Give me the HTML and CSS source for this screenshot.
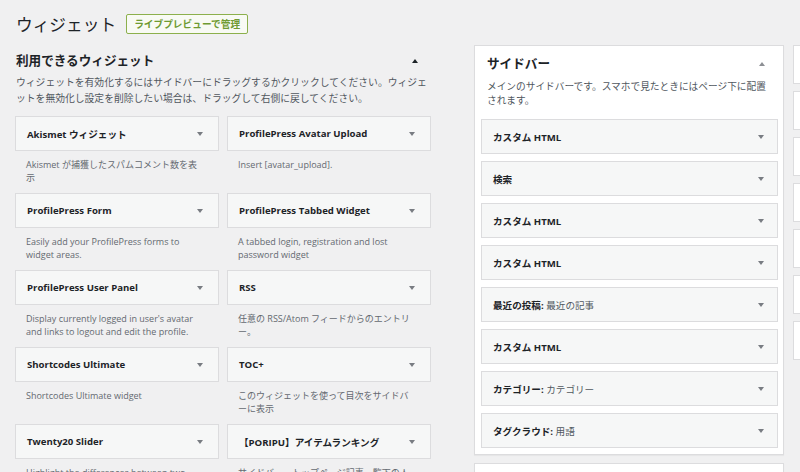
FILE: index.html
```html
<!DOCTYPE html>
<html lang="ja">
<head>
<meta charset="utf-8">
<title>ウィジェット</title>
<link rel="stylesheet" href="styles.css">
</head>
<body>
<header class="head">
  <h1 class="title">ウィジェット</h1>
  <a class="live-btn">ライブプレビューで管理</a>
</header>
<div class="columns">
  <section class="available">
    <div class="avail-head">
      <h2 class="sec-title">利用できるウィジェット</h2>
      <span class="tri-up"></span>
    </div>
    <p class="sec-desc">ウィジェットを有効化するにはサイドバーにドラッグするかクリックしてください。ウィジェットを無効化し設定を削除したい場合は、ドラッグして右側に戻してください。</p>
    <div class="widget-grid">
      <div class="widget">
        <div class="widget-top"><span class="wt">Akismet ウィジェット</span><span class="tri-down"></span></div>
        <p class="wdesc">Akismet が捕獲したスパムコメント数を表示</p>
      </div>
      <div class="widget">
        <div class="widget-top"><span class="wt">ProfilePress Avatar Upload</span><span class="tri-down"></span></div>
        <p class="wdesc">Insert [avatar_upload].</p>
      </div>
      <div class="widget">
        <div class="widget-top"><span class="wt">ProfilePress Form</span><span class="tri-down"></span></div>
        <p class="wdesc">Easily add your ProfilePress forms to widget areas.</p>
      </div>
      <div class="widget">
        <div class="widget-top"><span class="wt">ProfilePress Tabbed Widget</span><span class="tri-down"></span></div>
        <p class="wdesc">A tabbed login, registration and lost password widget</p>
      </div>
      <div class="widget">
        <div class="widget-top"><span class="wt">ProfilePress User Panel</span><span class="tri-down"></span></div>
        <p class="wdesc">Display currently logged in user's avatar and links to logout and edit the profile.</p>
      </div>
      <div class="widget">
        <div class="widget-top"><span class="wt">RSS</span><span class="tri-down"></span></div>
        <p class="wdesc">任意の RSS/Atom フィードからのエントリー。</p>
      </div>
      <div class="widget">
        <div class="widget-top"><span class="wt">Shortcodes Ultimate</span><span class="tri-down"></span></div>
        <p class="wdesc">Shortcodes Ultimate widget</p>
      </div>
      <div class="widget">
        <div class="widget-top"><span class="wt">TOC+</span><span class="tri-down"></span></div>
        <p class="wdesc">このウィジェットを使って目次をサイドバーに表示</p>
      </div>
      <div class="widget">
        <div class="widget-top"><span class="wt">Twenty20 Slider</span><span class="tri-down"></span></div>
        <p class="wdesc">Highlight the differences between two images.</p>
      </div>
      <div class="widget">
        <div class="widget-top"><span class="wt">【PORIPU】アイテムランキング</span><span class="tri-down"></span></div>
        <p class="wdesc">サイドバー、トップページ記事一覧下の人気アイテムを表示</p>
      </div>
    </div>
  </section>

  <div class="sidebars">
    <section class="sidebar">
      <div class="sb-head">
        <h2 class="sec-title">サイドバー</h2>
        <span class="tri-up light"></span>
      </div>
      <p class="sb-desc">メインのサイドバーです。スマホで見たときにはページ下に配置されます。</p>
      <div class="sb-items">
        <div class="sb-item"><span class="wt">カスタム HTML</span><span class="tri-down"></span></div>
        <div class="sb-item"><span class="wt">検索</span><span class="tri-down"></span></div>
        <div class="sb-item"><span class="wt">カスタム HTML</span><span class="tri-down"></span></div>
        <div class="sb-item"><span class="wt">カスタム HTML</span><span class="tri-down"></span></div>
        <div class="sb-item"><span class="wt">最近の投稿: <span class="in-title">最近の記事</span></span><span class="tri-down"></span></div>
        <div class="sb-item"><span class="wt">カスタム HTML</span><span class="tri-down"></span></div>
        <div class="sb-item"><span class="wt">カテゴリー: <span class="in-title">カテゴリー</span></span><span class="tri-down"></span></div>
        <div class="sb-item"><span class="wt">タグクラウド: <span class="in-title">用語</span></span><span class="tri-down"></span></div>
      </div>
    </section>
    <section class="sidebar next"></section>
  </div>

  <div class="more">
    <div class="more-box"></div>
    <div class="more-box"></div>
    <div class="more-box"></div>
    <div class="more-box"></div>
    <div class="more-box"></div>
    <div class="more-box"></div>
    <div class="more-box"></div>
  </div>
</div>
</body>
</html>
```

FILE: styles.css
```css
* { box-sizing: border-box; }
html, body { margin: 0; padding: 0; }
body {
  width: 800px;
  height: 472px;
  overflow: hidden;
  background: #f0f0f1;
  color: #1d2327;
  font-family: "Open Sans", "Noto Sans CJK JP", sans-serif;
}

.head {
  display: flex;
  align-items: center;
  height: 45px;
  padding: 3px 0 0 16px;
}
.title {
  margin: 0;
  font-family: "Noto Sans CJK JP", sans-serif;
  font-size: 16.7px;
  font-weight: 400;
  line-height: 20px;
  color: #1d2327;
}
.live-btn {
  display: flex;
  align-items: center;
  height: 20px;
  margin-left: 10px;
  padding: 0 7px;
  border: 1px solid #8cb04c;
  border-radius: 2px;
  background: #f8faf4;
  color: #6e9a32;
  font-family: "Noto Sans CJK JP", sans-serif;
  font-size: 9.7px;
  font-weight: 700;
}

.columns {
  display: flex;
  align-items: flex-start;
}
.available {
  flex-shrink: 0;
  width: 417px;
  margin-left: 15px;
}
.avail-head {
  display: flex;
  align-items: center;
  justify-content: space-between;
  height: 16px;
  margin-top: 8px;
  padding: 0 14px 0 1px;
}
.sec-title {
  margin: 0;
  font-size: 12.6px;
  font-weight: 700;
  line-height: 16px;
  color: #1d2327;
}
.sec-desc {
  margin: 6px 0 0 1px;
  font-size: 9.8px;
  line-height: 16px;
  color: #50575e;
}

.widget-grid {
  display: grid;
  grid-template-columns: 204px 204px;
  column-gap: 8px;
  margin-top: 9px;
}
.widget-top {
  display: flex;
  align-items: center;
  justify-content: space-between;
  height: 35px;
  padding: 0 15px 0 11px;
  border: 1px solid #dcdcde;
  background: #f6f7f7;
}
.wt {
  font-size: 9.6px;
  font-weight: 700;
  color: #1d2327;
  white-space: nowrap;
}
.in-title {
  font-weight: 400;
  color: #50575e;
}
.wdesc {
  margin: 0;
  padding: 8px 15px 9px 11px;
  font-size: 9px;
  line-height: 12.5px;
  color: #646970;
}

.tri-up {
  width: 0;
  height: 0;
  border-left: 3px solid transparent;
  border-right: 3px solid transparent;
  border-bottom: 4px solid #1d2327;
}
.tri-up.light { border-bottom-color: #8c8f94; }
.tri-down {
  flex-shrink: 0;
  width: 0;
  height: 0;
  border-left: 3px solid transparent;
  border-right: 3px solid transparent;
  border-top: 4px solid #787c82;
}

.sidebars {
  flex-shrink: 0;
  width: 310px;
  margin-left: 42px;
}
.sidebar {
  background: #fff;
  border: 1px solid #dcdcde;
  box-shadow: 0 1px 1px rgba(0, 0, 0, 0.04);
  padding: 10px 5px 6px 6px;
}
.sb-head {
  display: flex;
  align-items: center;
  justify-content: space-between;
  height: 16px;
  padding: 0 13px 0 6px;
}
.sb-desc {
  margin: 8px 0 0;
  padding: 0 6px;
  font-size: 9.7px;
  line-height: 14px;
  color: #50575e;
}
.sb-items {
  display: flex;
  flex-direction: column;
  gap: 7px;
  margin-top: 11px;
}
.sb-item {
  display: flex;
  align-items: center;
  justify-content: space-between;
  height: 35px;
  padding: 0 13px 0 11px;
  border: 1px solid #dcdcde;
  background: #f6f7f7;
}
.sidebar.next {
  height: 120px;
  margin-top: 8px;
}

.more {
  flex-shrink: 0;
  display: flex;
  flex-direction: column;
  gap: 7px;
  width: 200px;
  margin-left: 9px;
}
.more-box {
  height: 39px;
  background: #fff;
  border: 1px solid #dcdcde;
}
```
